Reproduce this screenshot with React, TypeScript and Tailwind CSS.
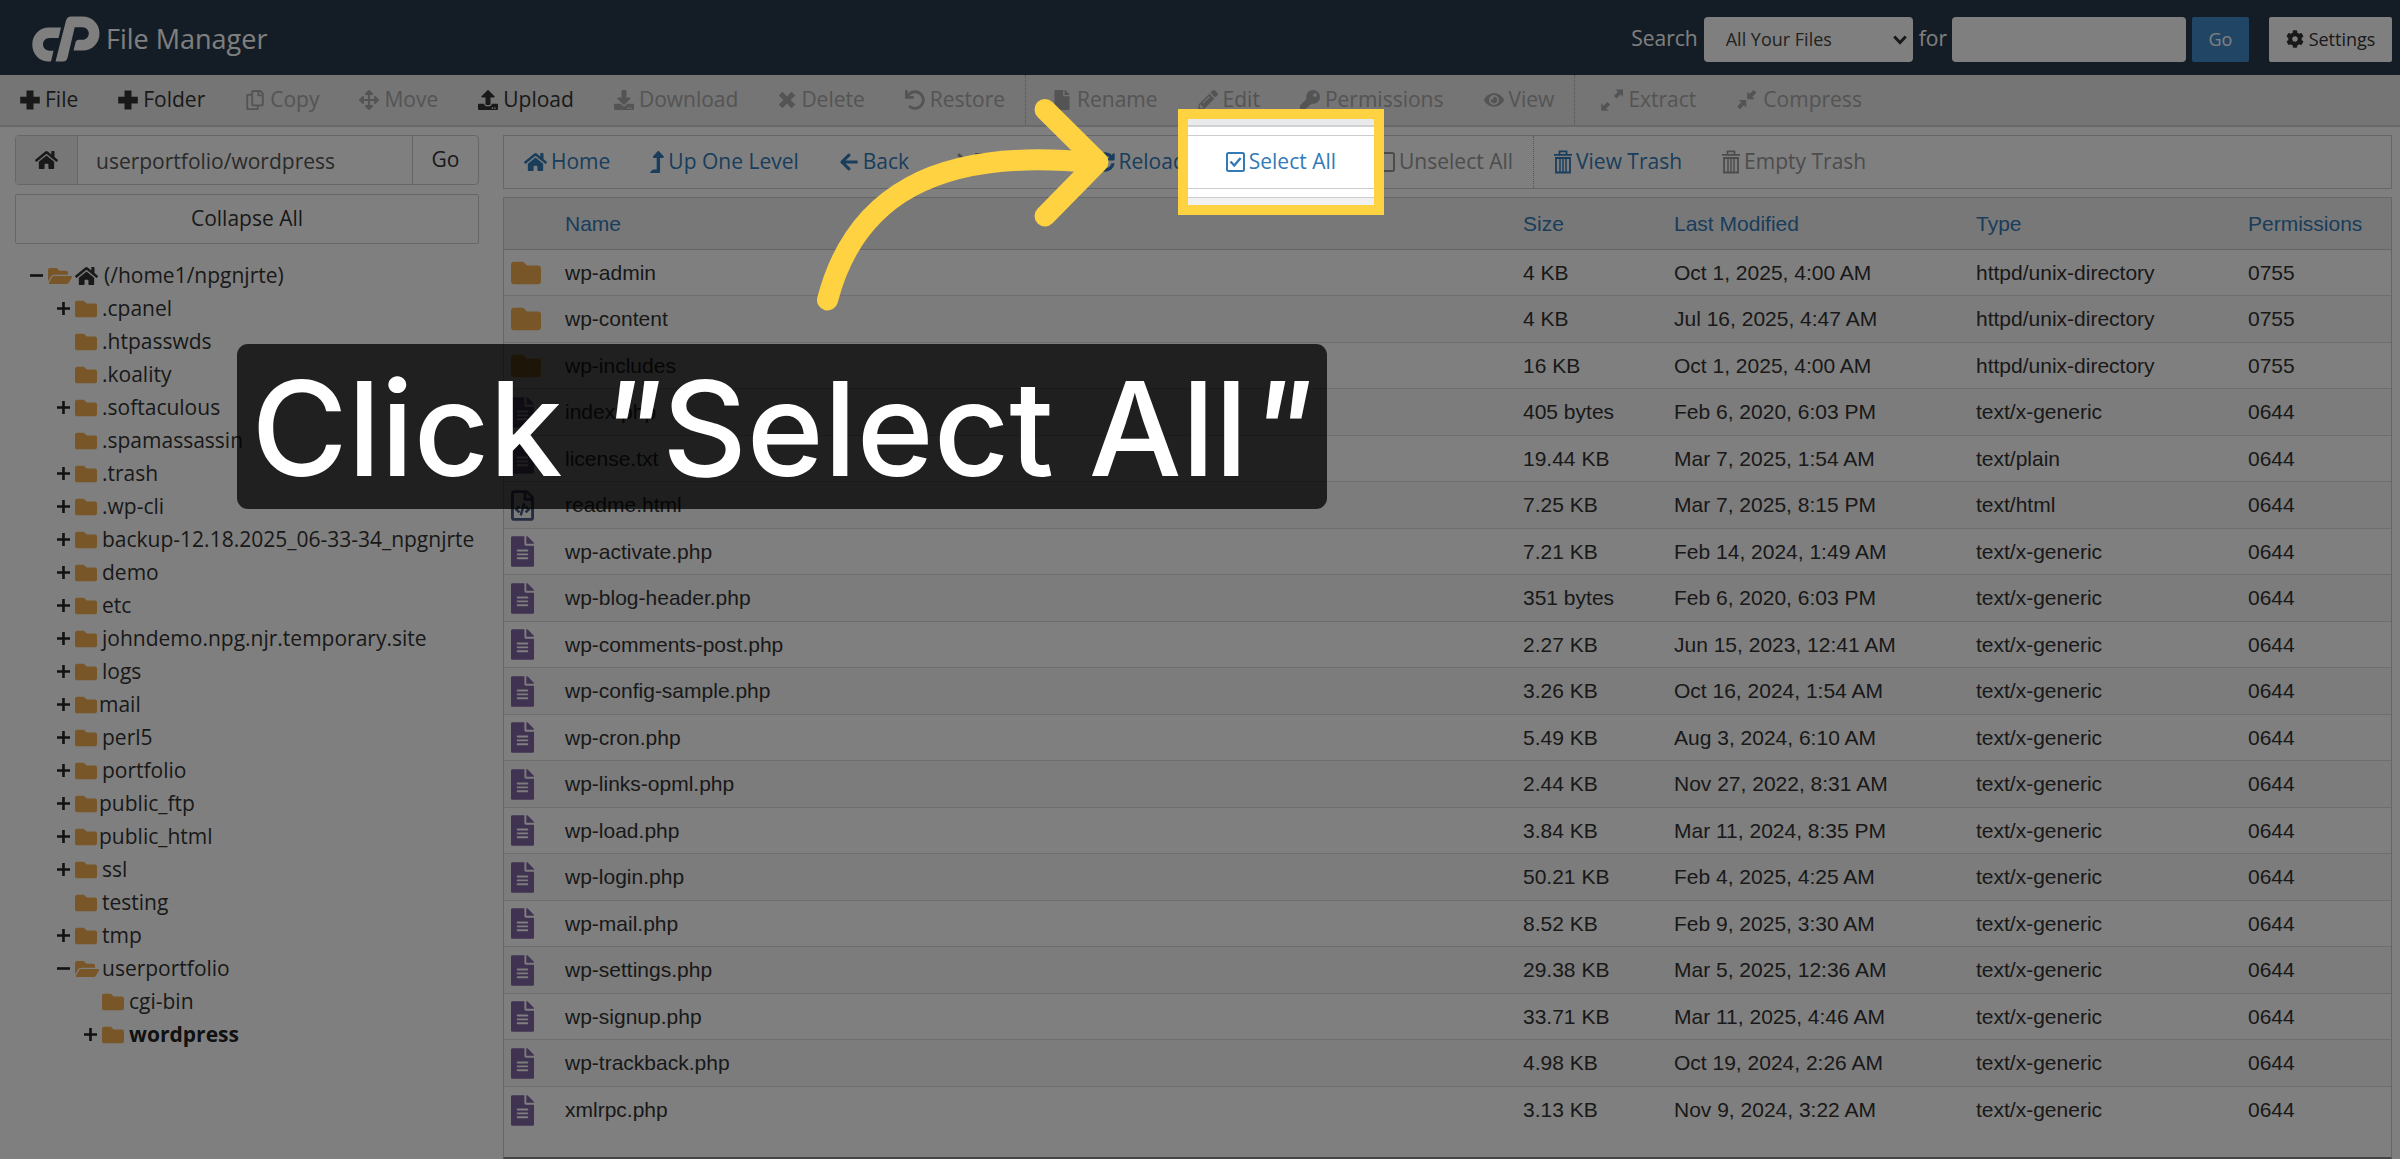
import type { ReactNode } from "react"
import {
  FaArrowLeft, FaArrowRight, FaArrowsAlt, FaCog, FaDownload, FaEye, FaFile, FaFileAlt,
  FaFolder, FaFolderOpen, FaHome, FaKey, FaLevelUpAlt, FaPencilAlt, FaRegCopy, FaRegFileCode,
  FaSyncAlt, FaUndo, FaUpload
} from "react-icons/fa"

interface Tool {
  label: string
  icon: ReactNode
  disabled?: boolean
  divider?: boolean
  highlight?: boolean
}

interface TreeNode {
  name: string
  level: number
  state?: "open" | "closed"
  special?: boolean
  current?: boolean
}

interface FileRow {
  name: string
  size: string
  modified: string
  type: string
  perms: string
}

function PlusIcon() {
  return (
    <svg viewBox="0 0 20 20" className="w-5 h-5" fill="currentColor">
      <path d="M6.5 0.5h7v6.3h6.3v6.6h-6.3v6.1h-7v-6.1H0.2V6.8h6.3z" />
    </svg>
  )
}

function CrossIcon() {
  return (
    <svg viewBox="0 0 18 18" className="w-[18px] h-[18px]" fill="currentColor">
      <path d="M4.4 0.8L9 5.4l4.6-4.6 3.6 3.6L12.6 9l4.6 4.6-3.6 3.6L9 12.6l-4.6 4.6-3.6-3.6L5.4 9 0.8 4.4z" />
    </svg>
  )
}

function ExpandIcon() {
  return (
    <svg viewBox="0 0 22 22" className="w-[22px] h-[22px]" fill="currentColor">
      <path d="M14.5 0.5H22V8l-2.4-2.4-4 4-2.7-2.7 4-4z" />
      <path d="M0.2 21.8v-7.5l2.4 2.4 3.8-3.8 2.7 2.7-3.8 3.8 2.4 2.4z" />
    </svg>
  )
}

function CompressIcon() {
  return (
    <svg viewBox="0 0 22 22" className="w-[22px] h-[22px]" fill="currentColor">
      <path d="M20.3 3.8l-4 4 2.4 2.4h-7.5V2.7l2.4 2.4 4-4z" />
      <path d="M1.2 17.5l4-4-2.4-2.4h7.5v7.5l-2.4-2.4-4 4z" />
    </svg>
  )
}

function BoxIcon({ checked }: { checked?: boolean }) {
  return (
    <svg viewBox="0 0 19 20" className="w-[19px] h-5" fill="none" stroke="currentColor" strokeWidth="2">
      <rect x="1" y="1" width="17" height="18" rx="1.5" />
      {checked && <path d="M4.5 9.5l3.8 4 6.3-7.5" strokeWidth="2.4" />}
    </svg>
  )
}

function TrashIcon() {
  return (
    <svg viewBox="0 0 18 24" className="w-[18px] h-6" fill="none" stroke="currentColor" strokeWidth="1.8">
      <path d="M0 4.8h18M5.5 4.5V1.4h7v3.1" />
      <path d="M2 8v14.5h14V8z" />
      <path d="M6 9v13M9 9v13M12 9v13" strokeWidth="1.5" />
    </svg>
  )
}

function CpanelLogo() {
  return (
    <svg viewBox="0 0 68 46" className="w-[68px] h-[46px]" fill="#fff" aria-hidden="true">
      <path d="M29 11.5L26.6 22H17.5C13.5 22 11 25 11 28.3c0 3.3 2.5 6.4 6.5 6.4h4L19 45.5h-2C7 45.5 0.3 38 0.3 28.5S7.5 11.5 17 11.5z" />
      <path d="M34 4.5C34.8 1.8 36.5 0.5 39 0.5h11C60.5 0.5 67.5 8 67.5 17.5S60.5 34.5 50.5 34.5H41.5L43.5 26.5c0.5-1.8 1.6-2.7 3.3-2.7H50.5c3.5 0 6.3-2.8 6.3-6.3s-2.8-6.3-6.3-6.3H42.7L35.5 42c-0.8 2.5-2.3 3.5-4.5 3.5H23.5z" />
    </svg>
  )
}

const fileTools: Tool[] = [
  { label: "File", icon: <PlusIcon /> },
  { label: "Folder", icon: <PlusIcon /> },
  { label: "Copy", icon: <FaRegCopy />, disabled: true },
  { label: "Move", icon: <FaArrowsAlt />, disabled: true },
  { label: "Upload", icon: <FaUpload /> },
  { label: "Download", icon: <FaDownload />, disabled: true },
  { label: "Delete", icon: <CrossIcon />, disabled: true },
  { label: "Restore", icon: <FaUndo />, disabled: true },
  { label: "Rename", icon: <FaFile />, disabled: true, divider: true },
  { label: "Edit", icon: <FaPencilAlt />, disabled: true },
  { label: "Permissions", icon: <FaKey />, disabled: true },
  { label: "View", icon: <FaEye />, disabled: true },
  { label: "Extract", icon: <ExpandIcon />, disabled: true, divider: true },
  { label: "Compress", icon: <CompressIcon />, disabled: true },
]

const navTools: Tool[] = [
  { label: "Home", icon: <FaHome className="w-[23px] h-[22px]" /> },
  { label: "Up One Level", icon: <FaLevelUpAlt className="w-[14px] h-[22px]" /> },
  { label: "Back", icon: <FaArrowLeft /> },
  { label: "Forward", icon: <FaArrowRight />, disabled: true },
  { label: "Reload", icon: <FaSyncAlt /> },
  { label: "Select All", icon: <BoxIcon checked />, highlight: true },
  { label: "Unselect All", icon: <BoxIcon />, disabled: true },
  { label: "View Trash", icon: <TrashIcon />, divider: true },
  { label: "Empty Trash", icon: <TrashIcon />, disabled: true },
]

const tree: TreeNode[] = [
  { name: "(/home1/npgnjrte)", level: 0, state: "open" },
  { name: ".cpanel", level: 1, state: "closed" },
  { name: ".htpasswds", level: 1 },
  { name: ".koality", level: 1 },
  { name: ".softaculous", level: 1, state: "closed" },
  { name: ".spamassassin", level: 1 },
  { name: ".trash", level: 1, state: "closed" },
  { name: ".wp-cli", level: 1, state: "closed" },
  { name: "backup-12.18.2025_06-33-34_npgnjrte", level: 1, state: "closed" },
  { name: "demo", level: 1, state: "closed" },
  { name: "etc", level: 1, state: "closed" },
  { name: "johndemo.npg.njr.temporary.site", level: 1, state: "closed" },
  { name: "logs", level: 1, state: "closed" },
  { name: "mail", level: 1, state: "closed", special: true },
  { name: "perl5", level: 1, state: "closed" },
  { name: "portfolio", level: 1, state: "closed" },
  { name: "public_ftp", level: 1, state: "closed", special: true },
  { name: "public_html", level: 1, state: "closed", special: true },
  { name: "ssl", level: 1, state: "closed" },
  { name: "testing", level: 1 },
  { name: "tmp", level: 1, state: "closed" },
  { name: "userportfolio", level: 1, state: "open" },
  { name: "cgi-bin", level: 2 },
  { name: "wordpress", level: 2, state: "closed", current: true },
]

const files: FileRow[] = [
  { name: "wp-admin", size: "4 KB", modified: "Oct 1, 2025, 4:00 AM", type: "httpd/unix-directory", perms: "0755" },
  { name: "wp-content", size: "4 KB", modified: "Jul 16, 2025, 4:47 AM", type: "httpd/unix-directory", perms: "0755" },
  { name: "wp-includes", size: "16 KB", modified: "Oct 1, 2025, 4:00 AM", type: "httpd/unix-directory", perms: "0755" },
  { name: "index.php", size: "405 bytes", modified: "Feb 6, 2020, 6:03 PM", type: "text/x-generic", perms: "0644" },
  { name: "license.txt", size: "19.44 KB", modified: "Mar 7, 2025, 1:54 AM", type: "text/plain", perms: "0644" },
  { name: "readme.html", size: "7.25 KB", modified: "Mar 7, 2025, 8:15 PM", type: "text/html", perms: "0644" },
  { name: "wp-activate.php", size: "7.21 KB", modified: "Feb 14, 2024, 1:49 AM", type: "text/x-generic", perms: "0644" },
  { name: "wp-blog-header.php", size: "351 bytes", modified: "Feb 6, 2020, 6:03 PM", type: "text/x-generic", perms: "0644" },
  { name: "wp-comments-post.php", size: "2.27 KB", modified: "Jun 15, 2023, 12:41 AM", type: "text/x-generic", perms: "0644" },
  { name: "wp-config-sample.php", size: "3.26 KB", modified: "Oct 16, 2024, 1:54 AM", type: "text/x-generic", perms: "0644" },
  { name: "wp-cron.php", size: "5.49 KB", modified: "Aug 3, 2024, 6:10 AM", type: "text/x-generic", perms: "0644" },
  { name: "wp-links-opml.php", size: "2.44 KB", modified: "Nov 27, 2022, 8:31 AM", type: "text/x-generic", perms: "0644" },
  { name: "wp-load.php", size: "3.84 KB", modified: "Mar 11, 2024, 8:35 PM", type: "text/x-generic", perms: "0644" },
  { name: "wp-login.php", size: "50.21 KB", modified: "Feb 4, 2025, 4:25 AM", type: "text/x-generic", perms: "0644" },
  { name: "wp-mail.php", size: "8.52 KB", modified: "Feb 9, 2025, 3:30 AM", type: "text/x-generic", perms: "0644" },
  { name: "wp-settings.php", size: "29.38 KB", modified: "Mar 5, 2025, 12:36 AM", type: "text/x-generic", perms: "0644" },
  { name: "wp-signup.php", size: "33.71 KB", modified: "Mar 11, 2025, 4:46 AM", type: "text/x-generic", perms: "0644" },
  { name: "wp-trackback.php", size: "4.98 KB", modified: "Oct 19, 2024, 2:26 AM", type: "text/x-generic", perms: "0644" },
  { name: "xmlrpc.php", size: "3.13 KB", modified: "Nov 9, 2024, 3:22 AM", type: "text/x-generic", perms: "0644" },
]

const indents = ["pl-[15px]", "pl-[42px]", "pl-[69px]"]

function FileIcon({ type }: { type: string }) {
  if (type === "httpd/unix-directory") return <FaFolder className="w-[30px] h-[30px] text-[#f0ad4e]" />
  if (type === "text/html") return <FaRegFileCode className="w-[23px] h-[31px] text-[#4a5a80]" />
  return <FaFileAlt className="w-[23px] h-[31px] text-[#8064a2]" />
}

function ToolButton({ tool, nav }: { tool: Tool; nav?: boolean }) {
  const color = tool.disabled ? (nav ? "text-[#999]" : "text-[#a8a8a8]") : nav ? "text-[#337ab7]" : "text-[#333]"
  return (
    <button
      disabled={tool.disabled}
      className={`relative h-full flex items-center pr-5 text-[21px] whitespace-nowrap ${color} ${nav ? "gap-1" : "gap-[5px]"} ${
        tool.divider && !nav ? "pl-[26px]" : "pl-5"
      } ${tool.divider ? "border-l border-dotted border-[#aaa]" : ""}`}
    >
      <span className="text-[20px]">{tool.icon}</span>
      {tool.label}
      {/* spotlight: the spread shadow dims the rest of the page */}
      {tool.highlight && (
        <span className="absolute z-10 left-1/2 top-1/2 -translate-x-1/2 -translate-y-1/2 w-[206px] h-[106px] border-[10px] border-[#ffd242] shadow-[0_0_0_2400px_rgba(0,0,0,0.5)]" />
      )}
    </button>
  )
}

function TreeRow({ node }: { node: TreeNode }) {
  return (
    <li className={`h-[33px] flex items-center ${indents[node.level]}`}>
      <span className="w-[13px] mr-[5px] shrink-0 text-[#222]">
        {node.state && (
          <svg viewBox="0 0 13 13" className="w-[13px] h-[13px]" stroke="currentColor" strokeWidth="2.6">
            <path d={node.state === "open" ? "M0 6.5h13" : "M0 6.5h13M6.5 0v13"} />
          </svg>
        )}
      </span>
      <span className={`shrink-0 text-[#f0ad4e] ${node.special ? "w-[24px]" : "w-[27px]"}`}>
        {node.state === "open"
          ? <FaFolderOpen className="w-6 h-[22px]" />
          : <FaFolder className="w-[22px] h-[22px]" />}
      </span>
      {node.level === 0 && <FaHome className="w-[23px] h-[22px] mr-[6px] shrink-0 text-[#333]" />}
      <a href="#" className={`text-[21px] whitespace-nowrap ${node.current ? "font-bold text-[#222]" : "text-[#333]"}`}>
        {node.name}
      </a>
    </li>
  )
}

export default function App() {
  return (
    <div className="relative min-h-screen flex flex-col overflow-hidden bg-white text-[#333] font-['Open_Sans',sans-serif]">
      <header className="h-[75px] shrink-0 bg-[#293a4a] flex items-center pt-[3px] pl-8 pr-2 text-white">
        <CpanelLogo />
        <h1 className="ml-[6px] text-[27px]">File Manager</h1>
        <form className="ml-auto flex items-center text-[21px]" onSubmit={e => e.preventDefault()}>
          <label htmlFor="scope" className="mr-[6px]">Search</label>
          <div className="relative mr-[6px]">
            <select id="scope" className="appearance-none w-[209px] h-[45px] pl-[22px] rounded-[4px] bg-white text-[18px] text-[#444]">
              <option>All Your Files</option>
            </select>
            <svg viewBox="0 0 14 10" className="absolute right-[6px] top-[18px] w-[14px] h-[10px] pointer-events-none" fill="none" stroke="#333" strokeWidth="3">
              <path d="M1.2 1.5L7 7.5l5.8-6" />
            </svg>
          </div>
          <label htmlFor="query" className="mr-[5px]">for</label>
          <input id="query" type="text" className="w-[234px] h-[45px] px-3 mr-[6px] rounded-[4px] bg-white text-[18px] text-[#444]" />
          <button type="submit" className="w-[57px] h-[45px] rounded-[2px] bg-[#428bca] text-[18px]">Go</button>
        </form>
        <button className="w-[123px] h-[45px] ml-5 rounded-[2px] bg-white text-[#333] text-[18px] flex items-center justify-center gap-[5px]">
          <FaCog />
          Settings
        </button>
      </header>

      <div className="h-[52px] shrink-0 flex bg-[#eaeaea] border-b-2 border-[#cfd2d4]">
        {fileTools.map(t => <ToolButton key={t.label} tool={t} />)}
      </div>

      <main className="flex-1 flex gap-6 pl-[15px] pr-2 pt-2">
        <aside className="w-[464px] shrink-0">
          <form className="h-[50px] flex border border-[#ccc] rounded-[4px]" onSubmit={e => e.preventDefault()}>
            <button type="button" aria-label="Home" className="w-[62px] shrink-0 bg-[#eee] border-r border-[#ccc] flex items-center justify-center">
              <FaHome className="w-[23px] h-[22px]" />
            </button>
            <input
              type="text"
              aria-label="Path"
              defaultValue="userportfolio/wordpress"
              className="flex-1 min-w-0 px-[18px] pt-[3px] text-[21px] text-[#555]"
            />
            <button type="submit" className="w-[66px] shrink-0 border-l border-[#ccc] text-[21px]">Go</button>
          </form>
          <button className="w-full h-[50px] mt-[9px] border border-[#ccc] rounded-[2px] text-[21px]">Collapse All</button>
          <ul className="mt-[15px]">
            {tree.map(n => <TreeRow key={n.name} node={n} />)}
          </ul>
        </aside>

        <section className="flex-1 min-w-0 flex flex-col">
          <nav className="h-[54px] shrink-0 flex border border-[#ccc]">
            {navTools.map(t => <ToolButton key={t.label} tool={t} nav />)}
          </nav>
          <div className="mt-2 flex-1 border border-[#ccc] border-b-2 border-b-[#888] font-['Liberation_Sans',sans-serif] text-[21px] leading-[28px]">
            <table className="w-full table-fixed border-separate border-spacing-0 text-left">
              <colgroup>
                <col className="w-[53px]" />
                <col />
                <col className="w-[151px]" />
                <col className="w-[302px]" />
                <col className="w-[272px]" />
                <col className="w-[151px]" />
              </colgroup>
              <thead>
                <tr className="h-[52px] bg-[#f1f1f1] text-[#337ab7] *:border-b *:border-[#ccc]">
                  <th className="pl-2" />
                  <th className="pl-2 font-normal">Name</th>
                  <th className="pl-2 font-normal">Size</th>
                  <th className="pl-2 font-normal">Last Modified</th>
                  <th className="pl-2 font-normal">Type</th>
                  <th className="pl-2 font-normal">Permissions</th>
                </tr>
              </thead>
              <tbody>
                {files.map(f => (
                  <tr key={f.name} className="h-[46px] even:h-[47px] even:bg-[#f8f8f8] *:border-b *:border-[#ddd] last:*:border-b-0">
                    <td className="pl-[7px]"><FileIcon type={f.type} /></td>
                    <td className="pl-2">{f.name}</td>
                    <td className="pl-2">{f.size}</td>
                    <td className="pl-2">{f.modified}</td>
                    <td className="pl-2">{f.type}</td>
                    <td className="pl-2">{f.perms}</td>
                  </tr>
                ))}
              </tbody>
            </table>
          </div>
        </section>
      </main>

      <svg viewBox="0 0 300 220" className="absolute z-20 left-[812px] top-[96px] w-[300px] h-[220px]" fill="none" stroke="#ffd242" strokeWidth="21" strokeLinecap="round" strokeLinejoin="round" aria-hidden="true">
        <path d="M15.5 204C42 102 122 50 282 67" />
        <path d="M233 13.5L286 66L233 120" />
      </svg>

      <div className="absolute z-20 left-[237px] top-[344px] w-[1090px] h-[165px] rounded-[11px] bg-black/75 text-white font-['Inter',sans-serif] font-medium text-[131px] leading-[170px] text-center whitespace-nowrap">
        Click <span className="italic">"</span>Select All<span className="italic">"</span>
      </div>
    </div>
  )
}
